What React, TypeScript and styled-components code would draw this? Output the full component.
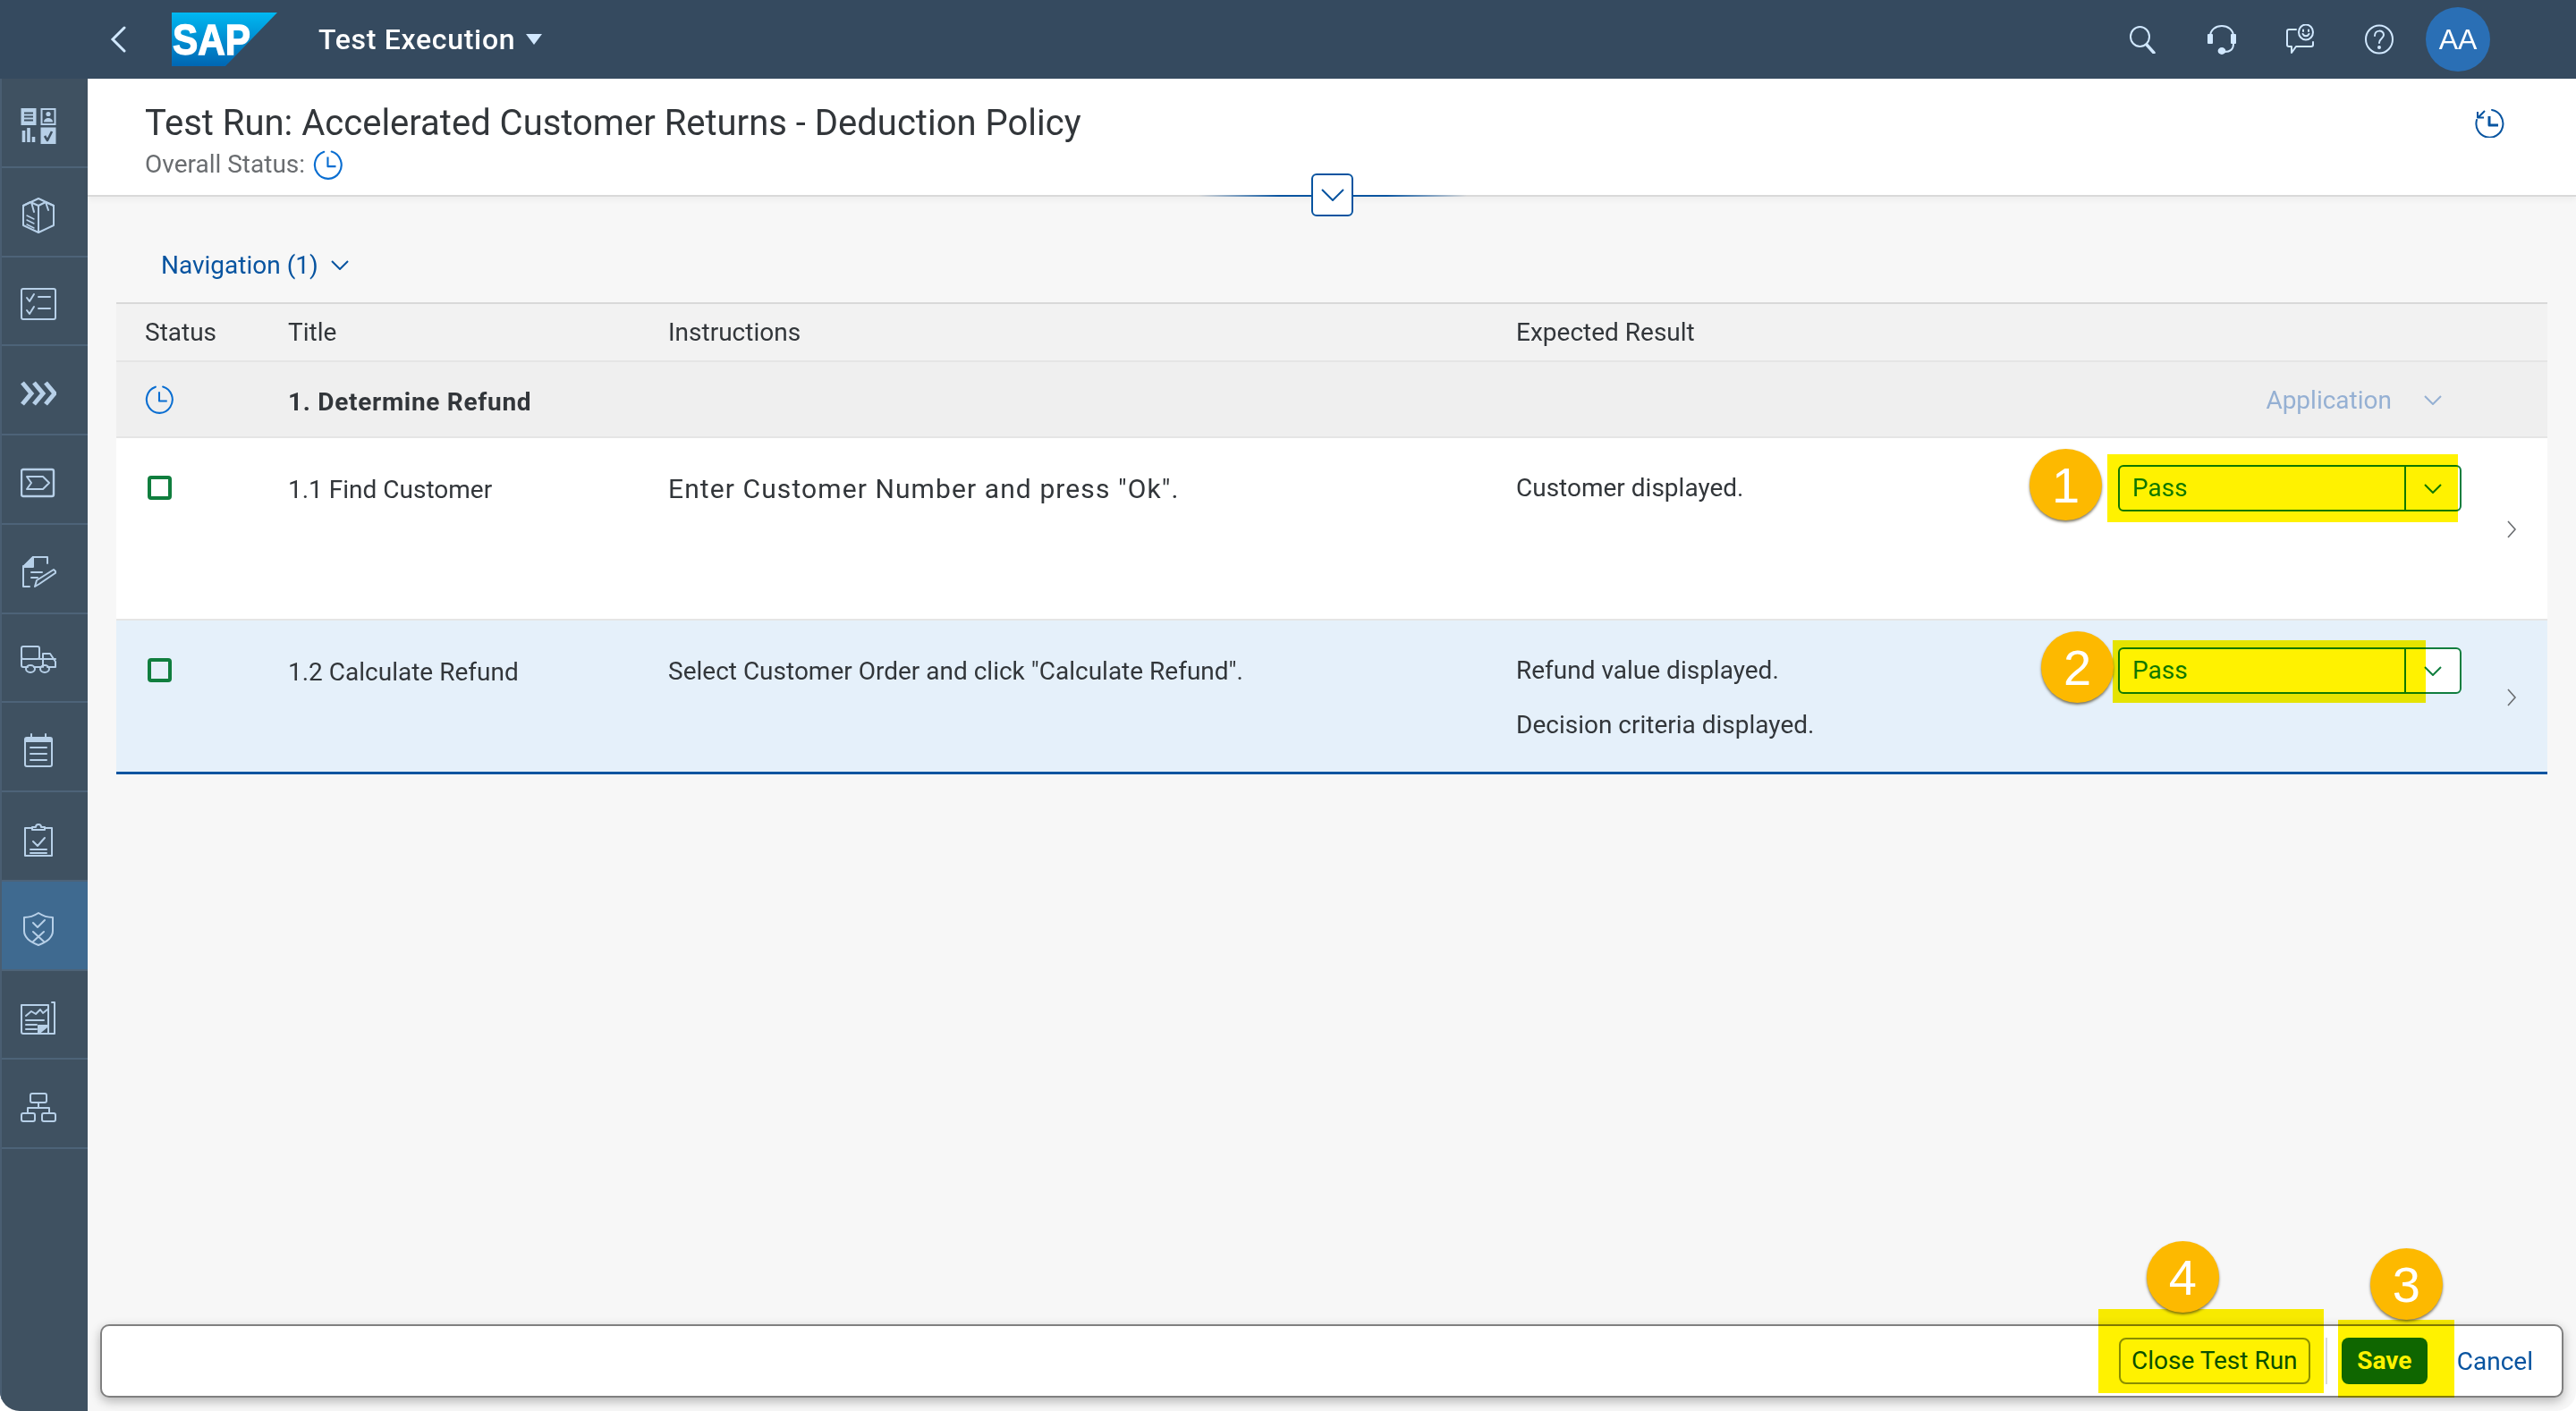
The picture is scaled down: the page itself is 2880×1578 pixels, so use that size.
import React from "react";
import styled, { createGlobalStyle } from "styled-components";

const FONT = `Roboto, "Liberation Sans", Arial, sans-serif`;

const GlobalStyle = createGlobalStyle`
  html, body { margin: 0; padding: 0; height: 100%; background: #fff; }
  body { font-family: ${FONT}; color: #32363a; }
  * { box-sizing: border-box; }
`;

const Glyph = ({ size = 40, vb = 40, children, fill = "none", width = 2 }: { size?: number; vb?: number; children: React.ReactNode; fill?: string; width?: number }) => (
  <svg width={size} height={size} viewBox={`0 0 ${vb} ${vb}`} fill={fill} stroke="currentColor" strokeWidth={width} strokeLinecap="round" strokeLinejoin="round">
    {children}
  </svg>
);

const Chevron = ({ w = 18, h = 10, color = "currentColor", sw = 2 }: { w?: number; h?: number; color?: string; sw?: number }) => (
  <svg width={w} height={h} viewBox={`0 0 ${w} ${h}`} fill="none" stroke={color} strokeWidth={sw} strokeLinejoin="miter">
    <path d={`M1 1 L${w / 2} ${h - 1} L${w - 1} 1`} />
  </svg>
);

const ClockIcon = ({ size = 32 }: { size?: number }) => (
  <Glyph size={size} vb={32} width={2}>
    <path d="M19.5 2.4 A14 14.5 0 1 1 11.5 2.6" />
    <path d="M15.5 8 V18 H24" stroke="#0a6ed1" strokeLinecap="butt" />
  </Glyph>
);

const sideIcons: React.ReactNode[] = [
  <Glyph key="a">
    <path d="M0.5 0h17v19h-17z" fill="currentColor" stroke="none" />
    <path d="M4 5.5h10M4 9.5h10M4 13.5h10" stroke="#3f5161" strokeLinecap="butt" />
    <path d="M23.5 1h15v17h-15z" strokeLinejoin="miter" />
    <circle cx="31" cy="6.5" r="2.6" fill="currentColor" stroke="none" />
    <path d="M26 15.5c0-6 10-6 10 0z" fill="currentColor" stroke="none" />
    <path d="M3.5 38V25M9 38V22M14.5 38v-6" strokeWidth="3.6" strokeLinecap="butt" />
    <path d="M22.5 21.5h17v18.5h-17z" fill="currentColor" stroke="none" />
    <path d="M27 31l3 5 5-10" stroke="#3f5161" strokeWidth="2.6" strokeLinecap="butt" />
  </Glyph>,
  <Glyph key="b">
    <path d="M20 1 L37 9 V31 L20 39 L3 31 V9z" />
    <path d="M3 9 L11 5 L20 9 L20 39 M20 9 L28 5 L37 9 M12 5 L15 16 M28 5 L31 14" />
    <path d="M7 20 L15 24 M7 25 L15 29 M7 30 L15 34" strokeWidth="1.4" />
  </Glyph>,
  <Glyph key="c">
    <rect x="1" y="3" width="38" height="34" rx="2" />
    <path d="M7 13l3 4 5-8M7 27l3 4 5-8M20 12h13M20 25h13" />
  </Glyph>,
  <Glyph key="d" width={5}>
    <path d="M2 8l10 12L2 32M15 8l10 12-10 12M28 8l10 12-10 12" strokeLinecap="butt" strokeLinejoin="miter" />
  </Glyph>,
  <Glyph key="e">
    <rect x="1" y="5" width="36" height="30" rx="2" strokeWidth="2.4" />
    <path d="M7 13h18l7 7-7 7H7l5-7z" />
  </Glyph>,
  <Glyph key="f">
    <path d="M14 3h16v7M10 36H3V14L14 3v11H3" />
    <path d="M3 14 L14 3 V13 H3z" fill="currentColor" />
    <path d="M12 20h12M12 26h7" />
    <path d="M16 36l2-7 19-12 3 3-19 13z" />
  </Glyph>,
  <Glyph key="g">
    <rect x="1" y="4" width="20" height="14" rx="2" />
    <path d="M1 18v7a2 2 0 0 0 2 2h5M15 27h8M30 27h9v-6l-6-9h-8v15M21 18h18" />
    <ellipse cx="11" cy="29" rx="5" ry="4" />
    <ellipse cx="27" cy="29" rx="5" ry="4" />
  </Glyph>,
  <Glyph key="h">
    <rect x="5" y="6" width="30" height="32" rx="2" />
    <path d="M5 6h30v5H5z" fill="currentColor" stroke="none" />
    <path d="M12 2v6M28 2v6" />
    <path d="M11 17h18M11 24h18M11 31h18" />
  </Glyph>,
  <Glyph key="i">
    <path d="M13 7H5v31h30V7h-8" />
    <path d="M13 9V6h4a3 3 0 0 1 6 0h4v3z" />
    <path d="M14 22l5 5 8-9M11 31h18M11 35h18" />
  </Glyph>,
  <Glyph key="j">
    <path d="M20 2 C26 6 31 7 36 7 V22 C36 30 28 35 20 38 C12 35 4 30 4 22 V7 C9 7 14 6 20 2z" />
    <path d="M14 13l5 5 8-8M14 23l12 11M26 23L14 34" />
  </Glyph>,
  <Glyph key="k">
    <path d="M1 6h30v32H3a2 2 0 0 1-2-2z" />
    <path d="M35 3h3v35h-7" />
    <path d="M6 18l6-5 5 3 5-5 3 4 5-4M6 23h20M6 28h12M6 33h12" />
    <path d="M20 38V29h11z" fill="currentColor" />
  </Glyph>,
  <Glyph key="l">
    <rect x="11" y="5" width="18" height="10" rx="2" />
    <rect x="1" y="27" width="15" height="9" rx="2" />
    <rect x="24" y="27" width="15" height="9" rx="2" />
    <path d="M20 15v6M8 27v-6h24v6" />
  </Glyph>,
];

const RowChevron = () => (
  <svg width="12" height="22" viewBox="0 0 12 22" fill="none" stroke="#6a6d70" strokeWidth="1.6">
    <path d="M2 2 L10 11 L2 20" />
  </svg>
);

export default function App() {
  return (
    <Page>
      <GlobalStyle />
      <TopBar>
        <BackButton>
          <svg width="18" height="30" viewBox="0 0 18 30" fill="none" stroke="currentColor" strokeWidth="3" strokeLinecap="round">
            <path d="M16 2 L3 15 L16 28" />
          </svg>
        </BackButton>
        <LogoWrap>
          <svg width="118" height="60" viewBox="0 0 118 60">
            <defs>
              <linearGradient id="sapGrad" x1="0" y1="0" x2="0" y2="1">
                <stop offset="0" stopColor="#00b8f1" />
                <stop offset="1" stopColor="#0066b3" />
              </linearGradient>
            </defs>
            <path d="M0 0 H118 L60 60 H0z" fill="url(#sapGrad)" />
            <text x="1" y="47" fontFamily="Liberation Sans" fontWeight="700" fontSize="49" fill="#fff" stroke="#fff" strokeWidth="1.4" textLength="87" lengthAdjust="spacingAndGlyphs">SAP</text>
          </svg>
        </LogoWrap>
        <AppTitle>Test Execution</AppTitle>
        <TitleCaret />
        <TopActions>
          <TopIcon>
            <Glyph size={32} vb={32}>
              <ellipse cx="12.5" cy="13" rx="10.5" ry="11" />
              <path d="M20 22 L28 31" strokeWidth="3.4" />
            </Glyph>
          </TopIcon>
          <TopIcon>
            <Glyph size={34} vb={34}>
              <path d="M4 17 V14 C4 -2 30 -2 30 14 V22 C30 28 26 31 20 31" />
              <path d="M2 12h4v9H2zM28 12h4v9h-4z" fill="currentColor" />
              <ellipse cx="17" cy="30" rx="3.4" ry="3" fill="currentColor" />
            </Glyph>
          </TopIcon>
          <TopIcon>
            <Glyph size={34} vb={34}>
              <path d="M12 6 H4 a2 2 0 0 0 -2 2 V23 a2 2 0 0 0 2 2 H7 V32 L12 25 H29 a2 2 0 0 0 2 -2 V20" />
              <ellipse cx="23" cy="9" rx="8" ry="8.5" />
              <path d="M19.5 11 C21 14 25 14 26.5 11" />
              <path d="M20 6.5v1.5M26 6.5v1.5" />
            </Glyph>
          </TopIcon>
          <TopIcon>
            <Glyph size={34} vb={34}>
              <ellipse cx="17" cy="17" rx="15" ry="15.5" />
              <path d="M12 13 C12 6 22 6 22 12 C22 16 17 16 17 21" />
              <circle cx="17" cy="26" r="1" fill="currentColor" />
            </Glyph>
          </TopIcon>
          <Avatar>AA</Avatar>
        </TopActions>
      </TopBar>

      <Body>
        <SideNav>
          {sideIcons.map((icon, i) => (
            <SideItem key={i} $active={i === 9}>{icon}</SideItem>
          ))}
        </SideNav>

        <Main>
          <Header>
            <HeaderText>
              <PageTitle>Test Run: Accelerated Customer Returns - Deduction Policy</PageTitle>
              <StatusLine>
                Overall Status:
                <BlueIcon><ClockIcon size={34} /></BlueIcon>
              </StatusLine>
            </HeaderText>
            <HistoryIcon>
              <Glyph size={34} vb={34} width={2}>
                <path d="M20 3 A15 15.5 0 1 1 3 14" />
                <path d="M12 4 L5 11 M4 5 V11.5 H11" strokeLinecap="butt" />
                <path d="M17 10 V20 H27" strokeWidth="3" strokeLinecap="butt" />
              </Glyph>
            </HistoryIcon>
            <CollapseLine />
            <CollapseButton>
              <Chevron w={26} h={14} />
            </CollapseButton>
          </Header>

          <Content>
            <NavLink>
              Navigation (1)
              <Chevron w={20} h={11} />
            </NavLink>
            <Table>
              <HeadRow>
                <HeadCell>Status</HeadCell>
                <HeadCell>Title</HeadCell>
                <HeadCell>Instructions</HeadCell>
                <HeadCell>Expected Result</HeadCell>
              </HeadRow>
              <GroupRow>
                <GroupIcon><ClockIcon size={33} /></GroupIcon>
                <GroupTitle>1. Determine Refund</GroupTitle>
                <AppFilter>
                  Application
                  <Chevron w={20} h={11} color="#95b0d3" />
                </AppFilter>
              </GroupRow>

              <StepRow $height={204}>
                <CheckCell><Checkbox /></CheckCell>
                <TitleCell>1.1 Find Customer</TitleCell>
                <WideInstruction>Enter Customer Number and press "Ok".</WideInstruction>
                <ResultCell>
                  <ResultLine>Customer displayed.</ResultLine>
                </ResultCell>
                <SelectCell>
                  <Select>
                    <SelectValue>Pass</SelectValue>
                    <SelectArrow><Chevron w={20} h={11} /></SelectArrow>
                  </Select>
                  <Highlight $left={-12} $top={-12} $width={392} $height={76} />
                  <Badge $left={-99} $top={-18}>1</Badge>
                </SelectCell>
                <RowArrow><RowChevron /></RowArrow>
              </StepRow>

              <StepRow $height={172} $selected>
                <CheckCell><Checkbox /></CheckCell>
                <TitleCell>1.2 Calculate Refund</TitleCell>
                <InstructionCell>Select Customer Order and click "Calculate Refund".</InstructionCell>
                <ResultCell>
                  <ResultLine>Refund value displayed.</ResultLine>
                  <ResultLine>Decision criteria displayed.</ResultLine>
                </ResultCell>
                <SelectCell>
                  <Select>
                    <SelectValue>Pass</SelectValue>
                    <SelectArrow><Chevron w={20} h={11} /></SelectArrow>
                  </Select>
                  <Highlight $left={-6} $top={-8} $width={350} $height={70} />
                  <Badge $left={-86} $top={-18}>2</Badge>
                </SelectCell>
                <RowArrow><RowChevron /></RowArrow>
              </StepRow>
            </Table>
          </Content>

          <Footer>
            <CloseWrap>
              <GhostButton>Close Test Run</GhostButton>
              <Highlight $left={-23} $top={-32} $width={252} $height={94} />
              <Badge $left={31} $top={-108}>4</Badge>
            </CloseWrap>
            <FooterDivider />
            <SaveWrap>
              <SaveButton>Save</SaveButton>
              <Highlight $left={-4} $top={-20} $width={130} $height={87} />
              <Badge $left={32} $top={-100}>3</Badge>
            </SaveWrap>
            <CancelButton>Cancel</CancelButton>
          </Footer>
        </Main>
      </Body>
    </Page>
  );
}

const Page = styled.div`
  width: 2880px;
  height: 1578px;
  display: flex;
  flex-direction: column;
  overflow: hidden;
  background: #f7f7f7;
  border-radius: 0 0 22px 22px;
`;

const TopBar = styled.header`
  height: 88px;
  flex: none;
  background: #354a5f;
  display: flex;
  align-items: center;
  color: #d1e8ff;
`;

const BackButton = styled.div`
  margin-left: 123px;
  width: 69px;
  display: flex;
  align-items: center;
`;

const LogoWrap = styled.div`
  display: flex;
  width: 164px;
`;

const AppTitle = styled.div`
  font-size: 32px;
  font-weight: 500;
  letter-spacing: 0.7px;
  color: #fff;
`;

const TitleCaret = styled.span`
  margin-left: 12px;
  border-left: 9px solid transparent;
  border-right: 9px solid transparent;
  border-top: 12px solid #d1e8ff;
`;

const TopActions = styled.div`
  margin-left: auto;
  margin-right: 96px;
  display: flex;
  align-items: center;
`;

const TopIcon = styled.div`
  width: 88px;
  display: flex;
  justify-content: center;
`;

const Avatar = styled.div`
  width: 72px;
  height: 72px;
  margin-left: 8px;
  border-radius: 50%;
  background: #2a6fb5;
  color: #fff;
  font-family: "Liberation Sans", sans-serif;
  font-size: 32px;
  display: flex;
  align-items: center;
  justify-content: center;
`;

const Body = styled.div`
  flex: 1;
  min-height: 0;
  display: flex;
`;

const SideNav = styled.nav`
  width: 98px;
  flex: none;
  background: #3f5161;
  border-left: 2px solid #4a5e72;
  color: #b7d0e8;
`;

const SideItem = styled.div<{ $active?: boolean }>`
  height: 99.75px;
  padding: 8px 15px 0 0;
  display: flex;
  align-items: center;
  justify-content: center;
  border-bottom: 2px solid #4d6378;
  background: ${(p) => (p.$active ? "#3f6a90" : "transparent")};
`;

const Main = styled.main`
  flex: 1;
  min-width: 0;
  display: flex;
  flex-direction: column;
`;

const Header = styled.section`
  position: relative;
  height: 132px;
  flex: none;
  background: #fff;
  border-bottom: 2px solid #d9d9d9;
  box-shadow: 0 4px 6px rgba(0, 0, 0, 0.04);
  padding: 24px 80px 0 64px;
  display: flex;
  justify-content: space-between;
`;

const HeaderText = styled.div`
  display: flex;
  flex-direction: column;
`;

const PageTitle = styled.h1`
  margin: 0;
  font-size: 40px;
  font-weight: 400;
  line-height: 52px;
  color: #32363a;
`;

const StatusLine = styled.div`
  display: flex;
  align-items: center;
  gap: 9px;
  margin-top: 2px;
  font-size: 28px;
  line-height: 36px;
  color: #6a6d70;
`;

const BlueIcon = styled.span`
  display: flex;
  color: #0a6ed1;
`;

const HistoryIcon = styled.div`
  color: #0854a0;
  margin: 8px 0 0;
`;

const CollapseLine = styled.div`
  position: absolute;
  left: 1242px;
  bottom: -2px;
  width: 300px;
  height: 2px;
  background: linear-gradient(90deg, transparent, #0854a0 30%, #0854a0 70%, transparent);
`;

const CollapseButton = styled.div`
  position: absolute;
  left: 1368px;
  top: 106px;
  width: 47px;
  height: 48px;
  background: #fff;
  border: 2px solid #0854a0;
  border-radius: 6px;
  color: #0854a0;
  display: flex;
  align-items: center;
  justify-content: center;
  z-index: 1;
`;

const Content = styled.section`
  flex: 1;
  min-height: 0;
  padding: 0 32px;
`;

const NavLink = styled.div`
  height: 118px;
  padding: 34px 0 0 50px;
  display: flex;
  align-items: center;
  gap: 14px;
  font-size: 28px;
  color: #0854a0;
`;

const Table = styled.div`
  display: flex;
  flex-direction: column;
`;

const COLUMNS = "192px 425px 948px 673px 384px 1fr";

const HeadRow = styled.div`
  height: 67px;
  display: grid;
  grid-template-columns: ${COLUMNS};
  align-items: center;
  background: #f2f2f2;
  border-top: 2px solid #d9d9d9;
  border-bottom: 2px solid #e5e5e5;
`;

const HeadCell = styled.div`
  font-size: 28px;
  color: #32363a;

  &:first-child {
    padding-left: 32px;
  }
`;

const GroupRow = styled.div`
  height: 85px;
  display: grid;
  grid-template-columns: ${COLUMNS};
  align-items: center;
  background: #efefef;
  border-bottom: 2px solid #e5e5e5;
`;

const GroupIcon = styled.div`
  display: flex;
  padding-left: 32px;
  color: #0a6ed1;
`;

const GroupTitle = styled.div`
  padding-top: 6px;
  font-size: 28px;
  font-weight: 700;
  letter-spacing: 0.7px;
  color: #32363a;
`;

const AppFilter = styled.div`
  grid-column: 3 / 6;
  justify-self: end;
  margin-right: 22px;
  padding-top: 2px;
  display: flex;
  align-items: center;
  gap: 36px;
  font-size: 28px;
  color: #95b0d3;
`;

const StepRow = styled.div<{ $height: number; $selected?: boolean }>`
  height: ${(p) => p.$height}px;
  display: grid;
  grid-template-columns: ${COLUMNS};
  align-items: start;
  padding-top: 30px;
  font-size: 28px;
  color: #32363a;
  background: ${(p) => (p.$selected ? "#e5f0fa" : "#fff")};
  border-bottom: ${(p) => (p.$selected ? "3px solid #0854a0" : "2px solid #e5e5e5")};
`;

const CheckCell = styled.div`
  padding: 12px 0 0 35px;
`;

const Checkbox = styled.div`
  width: 27px;
  height: 27px;
  border: 4px solid #107e3e;
  border-radius: 4px;
  background: transparent;
`;

const TitleCell = styled.div`
  padding-top: 10px;
  line-height: 36px;
`;

const InstructionCell = styled.div`
  padding-top: 9px;
  line-height: 36px;
`;

const WideInstruction = styled(InstructionCell)`
  font-size: 30px;
  letter-spacing: 1.1px;
`;

const ResultCell = styled.div`
  padding-top: 8px;
  display: flex;
  flex-direction: column;
  gap: 25px;
`;

const ResultLine = styled.div`
  line-height: 36px;
`;

const SelectCell = styled.div`
  position: relative;
`;

const Select = styled.div`
  height: 52px;
  display: flex;
  background: #fff;
  border: 2px solid #107e3e;
  border-radius: 6px;
  color: #107e3e;
`;

const SelectValue = styled.div`
  flex: 1;
  padding-left: 14px;
  font-size: 28px;
  line-height: 48px;
`;

const SelectArrow = styled.div`
  width: 62px;
  border-left: 2px solid #107e3e;
  display: flex;
  align-items: center;
  justify-content: center;
`;

const RowArrow = styled.div`
  align-self: stretch;
  display: flex;
  align-items: center;
  padding: 0 0 28px 50px;
`;

const Highlight = styled.div<{ $left: number; $top: number; $width: number; $height: number }>`
  position: absolute;
  left: ${(p) => p.$left}px;
  top: ${(p) => p.$top}px;
  width: ${(p) => p.$width}px;
  height: ${(p) => p.$height}px;
  background: #fff200;
  mix-blend-mode: multiply;
  pointer-events: none;
`;

const Badge = styled.div<{ $left: number; $top: number }>`
  position: absolute;
  left: ${(p) => p.$left}px;
  top: ${(p) => p.$top}px;
  width: 81px;
  height: 80px;
  z-index: 2;
  border-radius: 50%;
  background: #fdb900;
  color: #fff;
  font-family: "Liberation Sans", sans-serif;
  font-size: 56px;
  display: flex;
  align-items: center;
  justify-content: center;
  box-shadow: 0 2px 3px rgba(60, 50, 20, 0.65);
`;

const Footer = styled.footer`
  position: relative;
  height: 82px;
  flex: none;
  margin: 0 14px 15px;
  padding-right: 32px;
  display: flex;
  align-items: center;
  justify-content: flex-end;
  background: #fff;
  border: 2px solid #808080;
  border-radius: 10px;
  box-shadow: 0 4px 12px rgba(0, 0, 0, 0.28);
`;

const CloseWrap = styled.div`
  position: relative;
`;

const SaveWrap = styled.div`
  position: relative;
`;

const GhostButton = styled.div`
  height: 52px;
  width: 214px;
  border: 2px solid #8a96a3;
  border-radius: 8px;
  font-size: 28px;
  line-height: 48px;
  text-align: center;
  color: #0854a0;
  background: #fff;
`;

const FooterDivider = styled.div`
  width: 2px;
  height: 52px;
  margin: 0 16px 0 17px;
  background: #d9d9d9;
`;

const SaveButton = styled.div`
  width: 96px;
  height: 52px;
  border-radius: 8px;
  background: #0f6b2a;
  color: #fff;
  font-size: 28px;
  font-weight: 700;
  line-height: 52px;
  text-align: center;
`;

const CancelButton = styled.div`
  margin-left: 33px;
  font-size: 28px;
  color: #0854a0;
`;
